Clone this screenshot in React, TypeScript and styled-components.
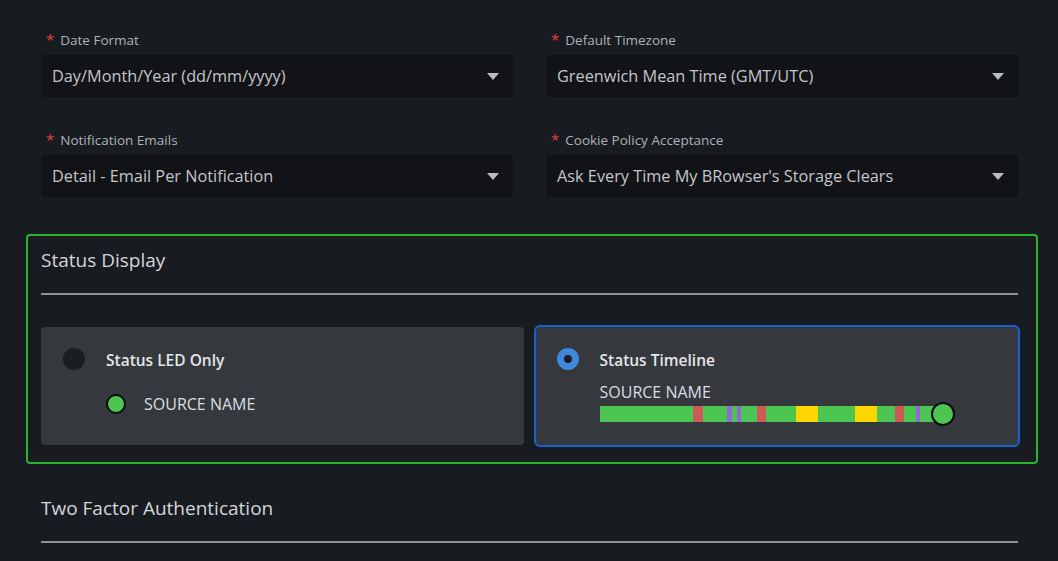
import styled, { createGlobalStyle } from "styled-components";

const GlobalStyle = createGlobalStyle`
  body {
    margin: 0;
    background: #181b1f;
    font-family: "Open Sans", "Noto Sans", sans-serif;
  }
`;

const Page = styled.div`
  width: 1058px;
  height: 561px;
  overflow: hidden;
  padding: 30px 40px 0 41px;
  box-sizing: border-box;
  color: #c9ccd1;
`;

const FormGrid = styled.div`
  display: grid;
  grid-template-columns: 472px 472px;
  column-gap: 33px;
  row-gap: 33px;
`;

const Field = styled.div`
  display: flex;
  flex-direction: column;
  gap: 6px;
`;

const Label = styled.label`
  font-size: 13.5px;
  line-height: 18px;
  color: #aeb2b8;
  padding-left: 5px;

  &::before {
    content: "*";
    color: #e0443e;
    margin-right: 6px;
    font-size: 15px;
  }
`;

const Select = styled.div`
  height: 42px;
  background: #111316;
  border-radius: 3px;
  display: flex;
  align-items: center;
  justify-content: space-between;
  padding: 0 14px 0 11px;
  font-size: 16.3px;
  color: #c3c6cb;
`;

const Caret = styled.span`
  width: 0;
  height: 0;
  border-left: 6px solid transparent;
  border-right: 6px solid transparent;
  border-top: 7px solid #b9bdc4;
`;

const StatusBox = styled.section`
  margin: 37px -20px 0 -15px;
  border: 2px solid #27b32e;
  border-radius: 4px;
  padding: 10px 18px 17px 13px;
`;

const SectionTitle = styled.h2`
  margin: 0;
  font-size: 19px;
  font-weight: 400;
  line-height: 28px;
  color: #d2d5da;
`;

const Rule = styled.hr`
  margin: 19px 0 0;
  border: none;
  border-top: 2px solid #8e9196;
`;

const Cards = styled.div`
  display: grid;
  grid-template-columns: 1fr 1fr;
  column-gap: 12px;
  margin-top: 32px;
`;

const Card = styled.div<{ $selected?: boolean }>`
  height: 118px;
  background: #35383d;
  border-radius: 4px;
  box-sizing: border-box;
  display: flex;
  gap: 21px;
  padding: 21px 0 0 22px;
  ${(p) =>
    p.$selected &&
    `
    margin: -2px;
    height: 122px;
    padding: 21px 0 0 21px;
    border: 2px solid #1761d1;
    border-radius: 6px;
  `}
`;

const Radio = styled.span<{ $checked?: boolean }>`
  flex: none;
  width: 22px;
  height: 22px;
  border-radius: 50%;
  box-sizing: border-box;
  background: #1a1d21;
  border: ${(p) => (p.$checked ? "7px solid #4087de" : "none")};
`;

const CardBody = styled.div`
  display: flex;
  flex-direction: column;
`;

const CardTitle = styled.div`
  font-size: 15.5px;
  font-weight: 600;
  line-height: 22px;
  padding-top: 1px;
  color: #e4e6e9;
`;

const LedRow = styled.div`
  display: flex;
  align-items: center;
  gap: 18px;
  margin-top: 22px;
  font-size: 16px;
  color: #dadde1;
`;

const Led = styled.span`
  width: 20px;
  height: 20px;
  box-sizing: border-box;
  border-radius: 50%;
  background: #4cc552;
  border: 2px solid #0b0c0d;
`;

const SourceLabel = styled.div`
  margin-top: 11px;
  font-size: 16px;
  line-height: 20px;
  color: #dadde1;
`;

const Timeline = styled.div`
  display: flex;
  align-items: center;
  width: 354px;
`;

const Segment = styled.span<{ $w: number; $c: string }>`
  flex: none;
  width: ${(p) => p.$w}px;
  height: 16px;
  background: ${(p) => p.$c};
`;

const Knob = styled.span`
  flex: none;
  width: 24px;
  height: 24px;
  box-sizing: border-box;
  border-radius: 50%;
  background: #4cc552;
  border: 2px solid #0b0c0d;
  margin-left: -12px;
`;

const Lower = styled.div`
  margin-top: 30px;
`;

const G = "#4cc552";
const R = "#cd5a55";
const P = "#9467d6";
const Y = "#fdd600";

const segments: [number, string][] = [
  [93, G],
  [10, R],
  [24, G],
  [5, P],
  [5, G],
  [4, P],
  [16, G],
  [9, R],
  [30, G],
  [22, Y],
  [37, G],
  [22, Y],
  [18, G],
  [9, R],
  [12, G],
  [4, P],
  [23, G],
];

const fields = [
  ["Date Format", "Day/Month/Year (dd/mm/yyyy)"],
  ["Default Timezone", "Greenwich Mean Time (GMT/UTC)"],
  ["Notification Emails", "Detail - Email Per Notification"],
  ["Cookie Policy Acceptance", "Ask Every Time My BRowser's Storage Clears"],
];

export default function App() {
  return (
    <>
      <GlobalStyle />
      <Page>
        <FormGrid>
          {fields.map(([label, value]) => (
            <Field key={label}>
              <Label>{label}</Label>
              <Select>
                <span>{value}</span>
                <Caret />
              </Select>
            </Field>
          ))}
        </FormGrid>

        <StatusBox>
          <SectionTitle>Status Display</SectionTitle>
          <Rule />
          <Cards>
            <Card>
              <Radio />
              <CardBody>
                <CardTitle>Status LED Only</CardTitle>
                <LedRow>
                  <Led />
                  SOURCE NAME
                </LedRow>
              </CardBody>
            </Card>
            <Card $selected>
              <Radio $checked />
              <CardBody>
                <CardTitle>Status Timeline</CardTitle>
                <SourceLabel>SOURCE NAME</SourceLabel>
                <Timeline>
                  {segments.map(([w, c], i) => (
                    <Segment key={i} $w={w} $c={c} />
                  ))}
                  <Knob />
                </Timeline>
              </CardBody>
            </Card>
          </Cards>
        </StatusBox>

        <Lower>
          <SectionTitle>Two Factor Authentication</SectionTitle>
          <Rule />
        </Lower>
      </Page>
    </>
  );
}
